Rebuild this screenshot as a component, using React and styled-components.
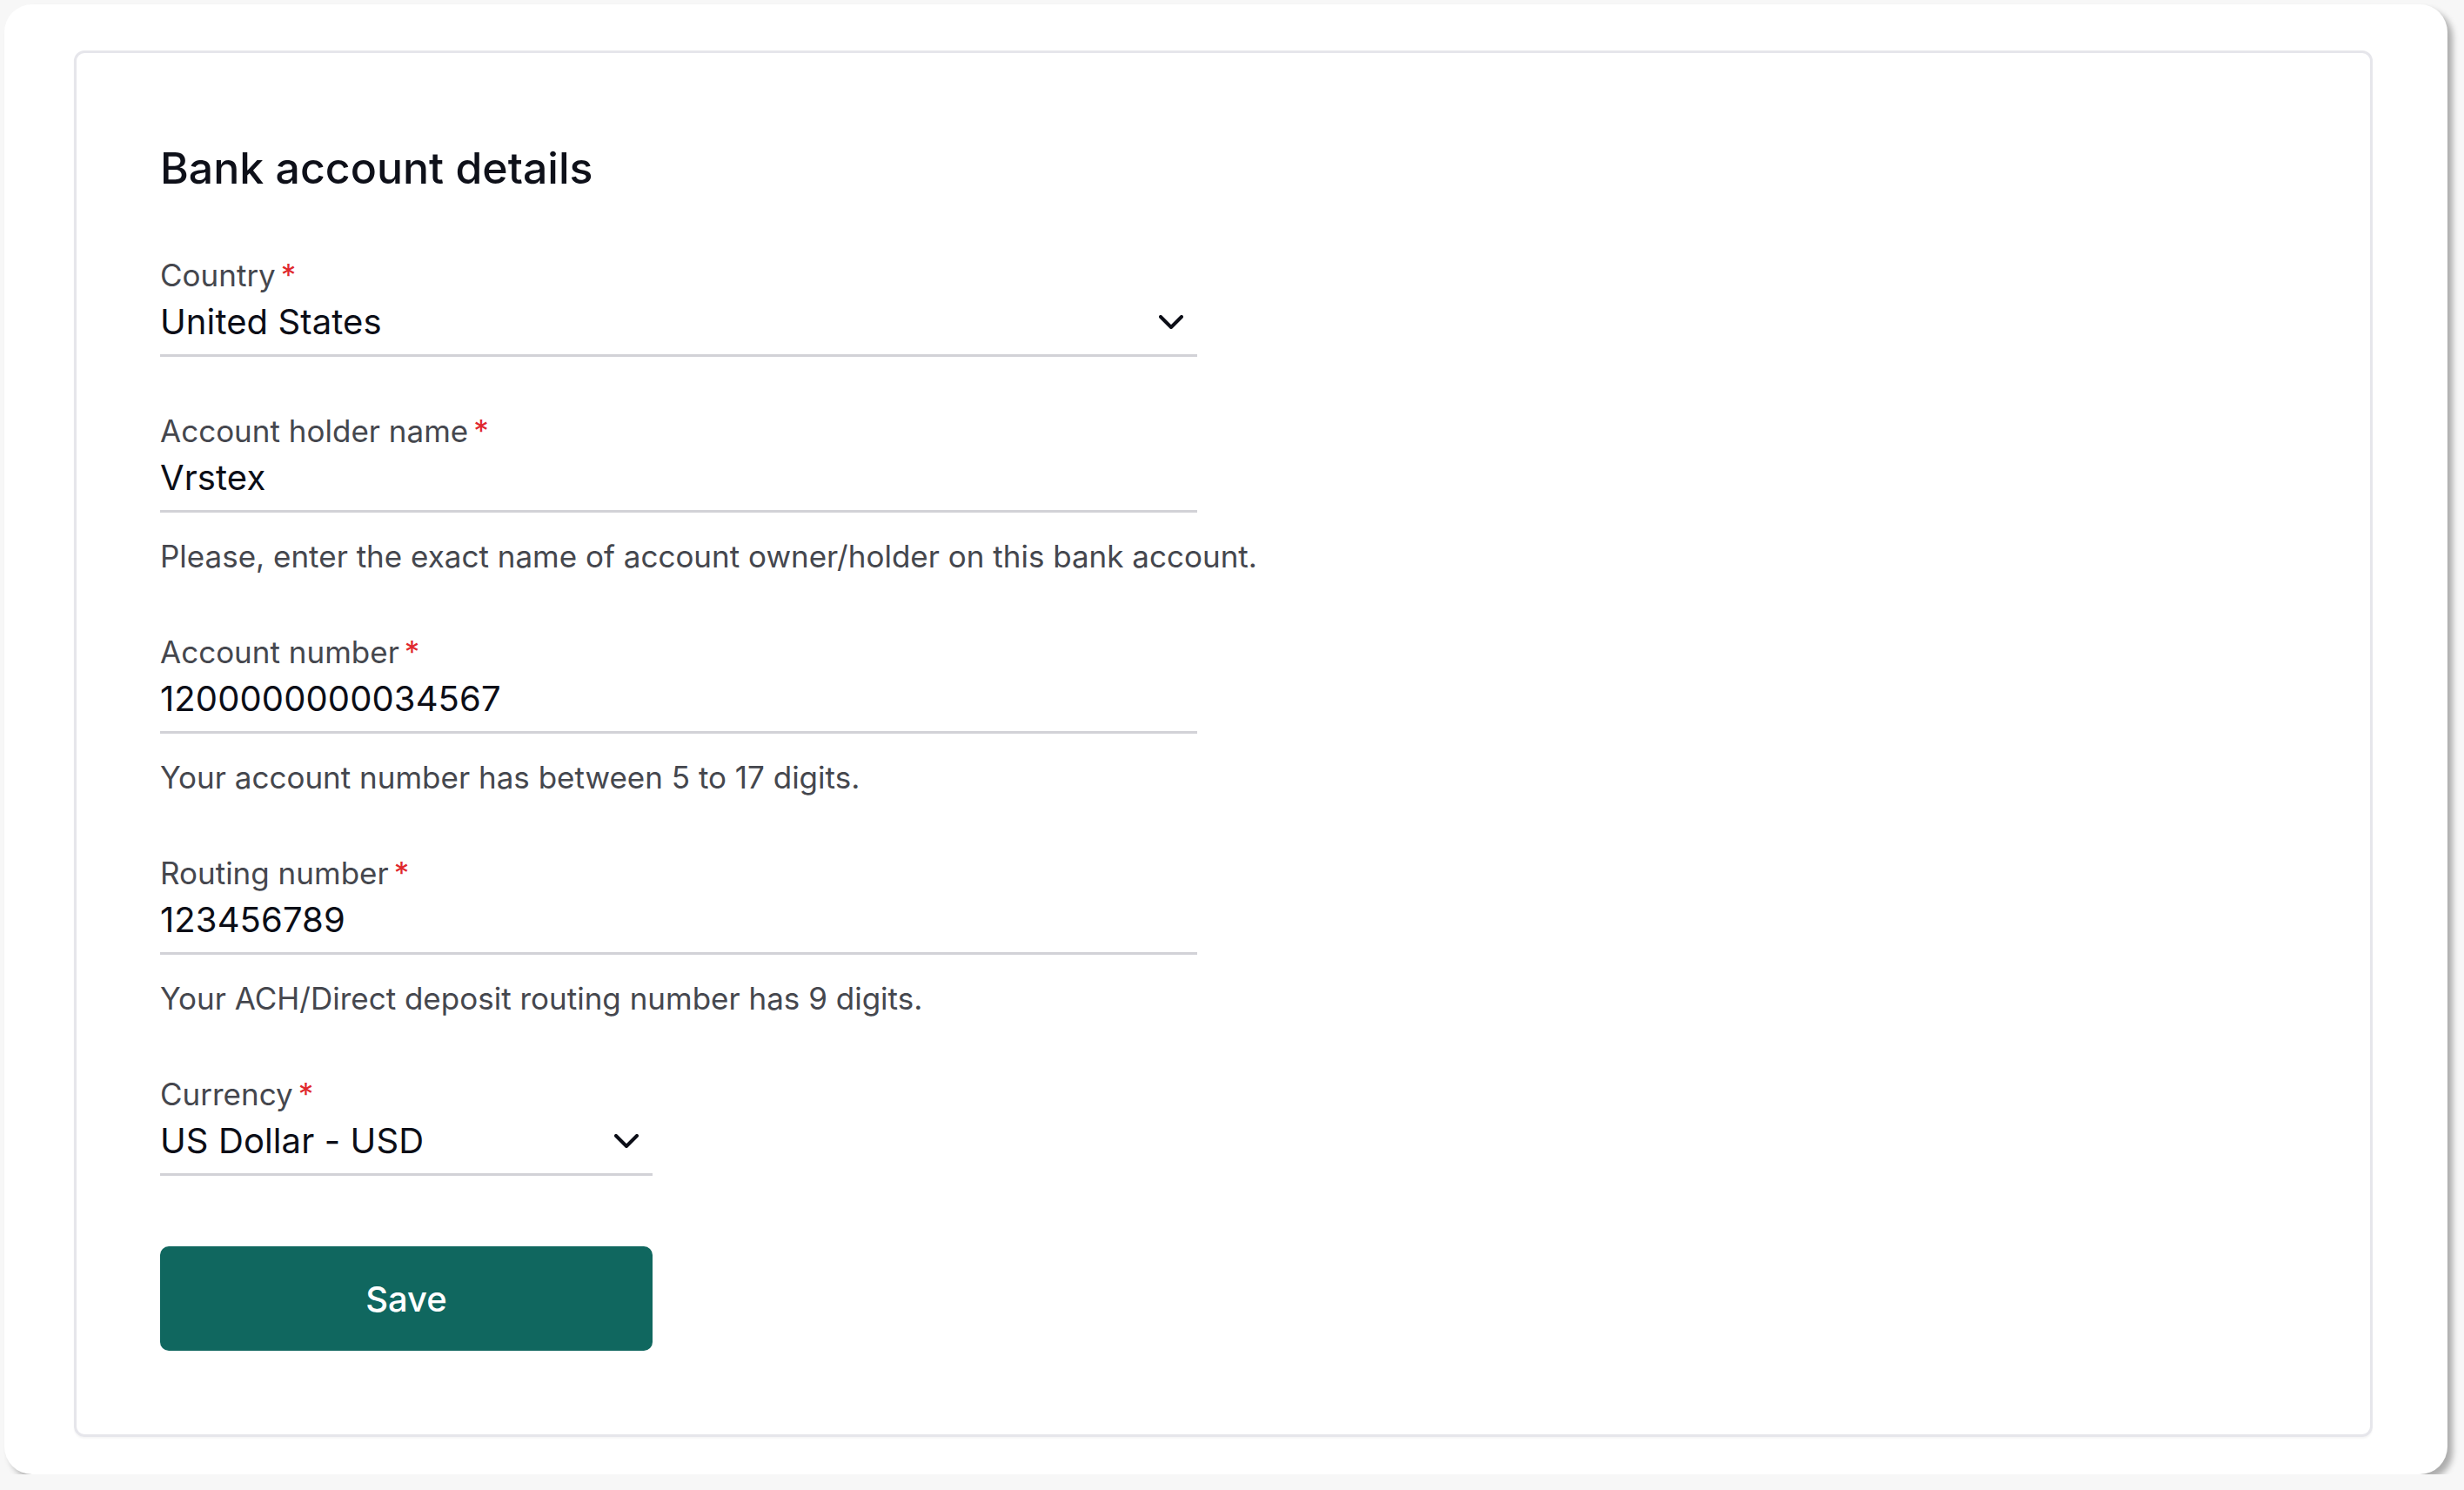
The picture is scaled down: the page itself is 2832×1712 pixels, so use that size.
import React from "react";
import styled, { createGlobalStyle } from "styled-components";

const GlobalStyle = createGlobalStyle`
  html, body {
    margin: 0;
    padding: 0;
    background: #f7f7f7;
  }

  body {
    font-family: Inter, "Noto Sans", "Liberation Sans", sans-serif;
    -webkit-font-smoothing: antialiased;
  }
`;

const Frame = styled.div`
  display: flex;
  box-sizing: border-box;
  margin: 5px 0 0 5px;
  width: 2808px;
  height: 1689px;
  padding: 53px 86px 43px 80px;
  background: #fff;
  border-radius: 32px;
  box-shadow: 6px 6px 7px rgba(0, 0, 0, 0.3);
`;

const Card = styled.section`
  flex: 1;
  display: flex;
  flex-direction: column;
  box-sizing: border-box;
  padding: 102px 96px 96px;
  border: 3px solid #e6e6eb;
  border-radius: 12px;
  box-shadow: 0 2px 2px rgba(0, 0, 0, 0.04);
`;

const Title = styled.h2`
  margin: 0 0 68px;
  font-size: 50px;
  line-height: 60px;
  font-weight: 500;
  color: #0e1019;
`;

const Form = styled.form`
  display: flex;
  flex-direction: column;
  gap: 60px;
`;

const Field = styled.div`
  display: flex;
  flex-direction: column;
  width: ${(p) => p.$width}px;
`;

const Label = styled.label`
  font-size: 35px;
  line-height: 50px;
  color: #45474e;
`;

const Required = styled.span`
  margin-left: 6px;
  color: #e0282e;
`;

const Control = styled.div`
  display: flex;
  align-items: center;
  justify-content: space-between;
  box-sizing: border-box;
  padding: 1px 16px 9px 0;
  border-bottom: 3px solid #d2d2d7;
`;

const Value = styled.span`
  font-size: 40px;
  line-height: 56px;
  letter-spacing: 0.1px;
  color: #0c0e17;
`;

const Hint = styled.p`
  margin: 25px 0 0;
  width: 1400px;
  font-size: 35px;
  line-height: 50px;
  color: #45474e;
`;

const SaveButton = styled.button`
  margin-top: 81px;
  width: 566px;
  height: 120px;
  border: none;
  border-radius: 10px;
  background: #10675f;
  color: #fff;
  font-family: inherit;
  font-size: 40px;
  font-weight: 500;
  cursor: pointer;
`;

const Chevron = () => (
  <svg width="28" height="16" viewBox="0 0 28 16" fill="none">
    <path
      d="M2 2l12 12 12-12"
      stroke="#0c0e17"
      strokeWidth="4"
      strokeLinecap="round"
      strokeLinejoin="round"
    />
  </svg>
);

const fields = [
  { label: "Country", value: "United States", select: true, width: 1192 },
  {
    label: "Account holder name",
    value: "Vrstex",
    width: 1192,
    hint: "Please, enter the exact name of account owner/holder on this bank account."
  },
  {
    label: "Account number",
    value: "1200000000034567",
    width: 1192,
    hint: "Your account number has between 5 to 17 digits."
  },
  {
    label: "Routing number",
    value: "123456789",
    width: 1192,
    hint: "Your ACH/Direct deposit routing number has 9 digits."
  },
  { label: "Currency", value: "US Dollar - USD", select: true, width: 566 }
];

const App = () => {
  return (
    <>
      <GlobalStyle />
      <Frame>
        <Card>
          <Title>Bank account details</Title>
          <Form onSubmit={(e) => e.preventDefault()}>
            {fields.map((f) => (
              <Field key={f.label} $width={f.width}>
                <Label>
                  {f.label}
                  <Required>*</Required>
                </Label>
                <Control>
                  <Value>{f.value}</Value>
                  {f.select && <Chevron />}
                </Control>
                {f.hint && <Hint>{f.hint}</Hint>}
              </Field>
            ))}
          </Form>
          <div>
            <SaveButton type="button">Save</SaveButton>
          </div>
        </Card>
      </Frame>
    </>
  );
};

export default App;
